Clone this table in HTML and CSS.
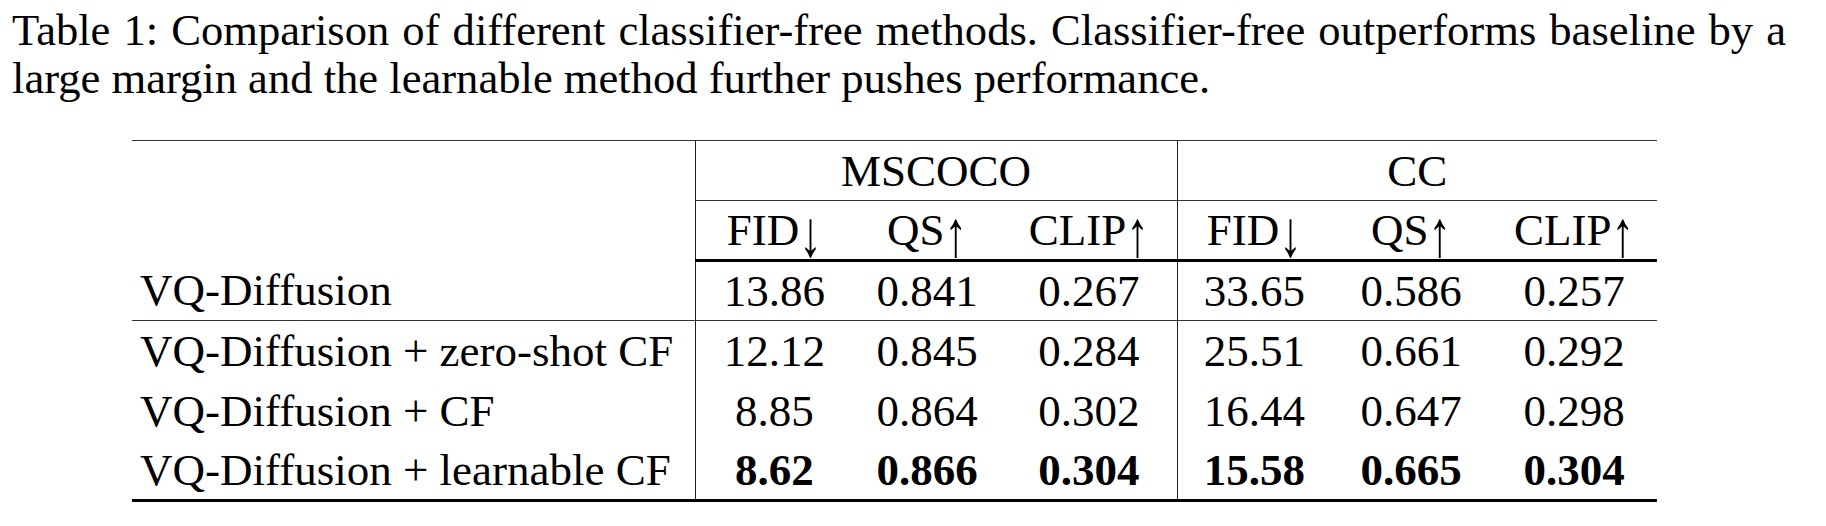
FILE: index.html
```html
<!DOCTYPE html>
<html lang="en">

<head>
  <meta charset="UTF-8">
  <title>Table 1</title>
  <link rel="stylesheet" href="styles.css">
</head>

<body>
  <div class="page">
    <p class="caption">Table 1: Comparison of different classifier-free methods. Classifier-free outperforms baseline by a large margin and the learnable method further pushes performance.</p>
    <table class="results">
      <colgroup>
        <col class="c-name">
        <col class="c-fid">
        <col class="c-qs">
        <col class="c-clip">
        <col class="c-fid2">
        <col class="c-qs2">
        <col class="c-clip2">
      </colgroup>
      <thead>
        <tr class="group-row">
          <th rowspan="2" class="name"></th>
          <th colspan="3" class="group sep">MSCOCO</th>
          <th colspan="3" class="group sep">CC</th>
        </tr>
        <tr class="metric-row">
          <th class="sep">FID<span class="arrow">↓</span></th>
          <th>QS<span class="arrow">↑</span></th>
          <th>CLIP<span class="arrow">↑</span></th>
          <th class="sep">FID<span class="arrow">↓</span></th>
          <th>QS<span class="arrow">↑</span></th>
          <th>CLIP<span class="arrow">↑</span></th>
        </tr>
      </thead>
      <tbody>
        <tr class="base">
          <td class="name">VQ-Diffusion</td>
          <td class="sep">13.86</td>
          <td>0.841</td>
          <td>0.267</td>
          <td class="sep">33.65</td>
          <td>0.586</td>
          <td>0.257</td>
        </tr>
        <tr>
          <td class="name">VQ-Diffusion + zero-shot CF</td>
          <td class="sep">12.12</td>
          <td>0.845</td>
          <td>0.284</td>
          <td class="sep">25.51</td>
          <td>0.661</td>
          <td>0.292</td>
        </tr>
        <tr>
          <td class="name">VQ-Diffusion + CF</td>
          <td class="sep">8.85</td>
          <td>0.864</td>
          <td>0.302</td>
          <td class="sep">16.44</td>
          <td>0.647</td>
          <td>0.298</td>
        </tr>
        <tr class="best">
          <td class="name">VQ-Diffusion + learnable CF</td>
          <td class="sep">8.62</td>
          <td>0.866</td>
          <td>0.304</td>
          <td class="sep">15.58</td>
          <td>0.665</td>
          <td>0.304</td>
        </tr>
      </tbody>
    </table>
  </div>
</body>

</html>
```

FILE: styles.css
```css
* {
  padding: 0;
  margin: 0;
  box-sizing: border-box;
}

body {
  background-color: #fff;
  color: #000;
  font-family: "Liberation Serif", "Times New Roman", serif;
}

.page {
  padding: 6px 0 0 12px;
}

.caption {
  width: 1774px;
  font-size: 44.6px;
  line-height: 48px;
  text-align: justify;
}

.results {
  margin: 38px 0 0 120px;
  border-collapse: collapse;
  font-size: 45px;
  line-height: 58px;
  border-top: 1.5px solid #333;
  border-bottom: 3.5px solid #000;
}

.c-name { width: 563px; }
.c-fid { width: 158px; }
.c-qs { width: 148px; }
.c-clip { width: 176px; }
.c-fid2 { width: 154px; }
.c-qs2 { width: 160px; }
.c-clip2 { width: 166px; }

th,
td {
  font-weight: normal;
  text-align: center;
  padding: 0;
  height: 60px;
  white-space: nowrap;
}

.name {
  text-align: left;
  padding-left: 8px;
}

.sep {
  border-left: 1.5px solid #222;
}

.group {
  border-bottom: 1.5px solid #333;
}

.metric-row th {
  border-bottom: 3.5px solid #000;
}

.arrow {
  display: inline-block;
  transform: translateY(0.1em) scaleY(1.45);
}

.base td {
  border-bottom: 1.5px solid #333;
}

.best td:not(.name) {
  font-weight: bold;
}
```
